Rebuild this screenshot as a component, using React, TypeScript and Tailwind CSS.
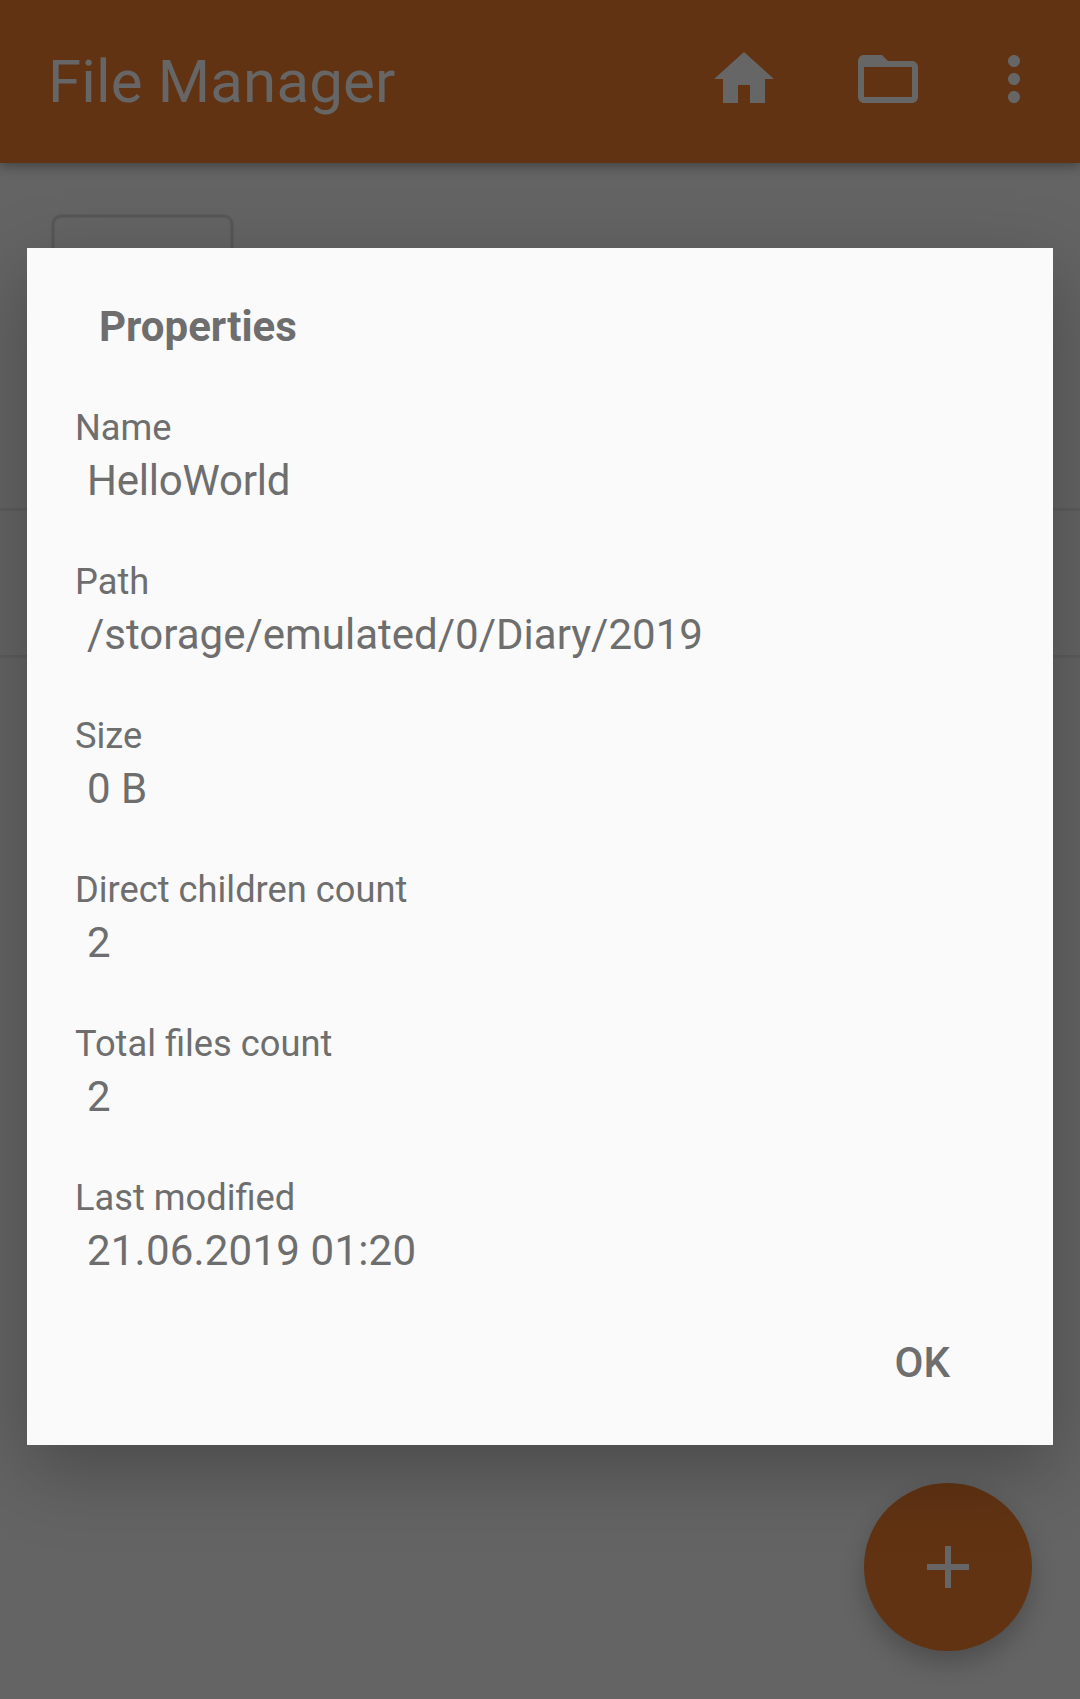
const properties = [
  { label: "Name", value: "HelloWorld", tracking: "tracking-[-0.2px]" },
  { label: "Path", value: "/storage/emulated/0/Diary/2019", tracking: "tracking-normal" },
  { label: "Size", value: "0 B", tracking: "tracking-normal" },
  { label: "Direct children count", value: "2", tracking: "tracking-normal" },
  { label: "Total files count", value: "2", tracking: "tracking-normal" },
  { label: "Last modified", value: "21.06.2019 01:20", tracking: "tracking-[0.2px]" },
];

function Icon({ d }: { d: string }) {
  return (
    <svg viewBox="0 0 24 24" className="size-[72px] shrink-0 fill-current">
      <path d={d} />
    </svg>
  );
}

function AppBar() {
  return (
    <header className="relative flex h-[163px] shrink-0 items-start bg-[#613313] pl-12 pr-[30px] pt-[43px] text-[#666666] shadow-[0_4px_10px_rgba(0,0,0,0.3)]">
      <h1 className="mr-auto text-[60px] leading-[77px] tracking-[0.15px]">File Manager</h1>
      <button className="mr-[72px]">
        <Icon d="M10 20v-6h4v6h5v-8h3L12 3 2 12h3v8z" />
      </button>
      <button className="mr-[54px]">
        <Icon d="M20 6h-8l-2-2H4c-1.1 0-1.99.9-1.99 2L2 18c0 1.1.9 2 2 2h16c1.1 0 2-.9 2-2V8c0-1.1-.9-2-2-2zm0 12H4V8h16v10z" />
      </button>
      <button>
        <Icon d="M12 8c1.1 0 2-.9 2-2s-.9-2-2-2-2 .9-2 2 .9 2 2 2zm0 2c-1.1 0-2 .9-2 2s.9 2 2 2 2-.9 2-2-.9-2-2-2zm0 6c-1.1 0-2 .9-2 2s.9 2 2 2 2-.9 2-2-.9-2-2-2z" />
      </button>
    </header>
  );
}

function PropertiesDialog() {
  return (
    <section className="absolute left-[27px] top-[248px] flex h-[1197px] w-[1026px] flex-col bg-[#fafafa] text-[#6e6e6e] shadow-[0_24px_72px_rgba(0,0,0,0.27)]">
      <h2 className="ml-[72px] mt-[54px] text-[42px] font-bold leading-[49px]">Properties</h2>
      <dl className="ml-12 mt-14 flex flex-col gap-14">
        {properties.map((p) => (
          <div key={p.label} className="flex flex-col gap-[7px]">
            <dt className="text-[36.25px] leading-[42px]">{p.label}</dt>
            <dd className={`pl-3 text-[42px] leading-[49px] ${p.tracking}`}>{p.value}</dd>
          </div>
        ))}
      </dl>
      <button className="mr-[103px] mt-[63px] self-end text-[42px] font-medium leading-[49px]">OK</button>
    </section>
  );
}

export default function App() {
  return (
    <div className="relative flex h-[1699px] w-[1080px] flex-col overflow-hidden bg-[#646464] font-['Roboto',sans-serif]">
      <AppBar />
      <main className="flex flex-col">
        <div className="h-[348px] border-b-[3px] border-[#5d5d5d] pl-[52px] pt-[52px]">
          <div className="h-[180px] w-[181px] rounded-[9px] border-2 border-[#565656] shadow-[0_0_2px_rgba(0,0,0,0.2),inset_0_0_2px_rgba(0,0,0,0.2)]" />
        </div>
        <div className="h-[147px] border-b-[3px] border-[#5d5d5d]" />
      </main>
      <button className="absolute left-[864px] top-[1483px] flex size-[168px] items-center justify-center rounded-full bg-[#613313] text-[#666666] shadow-[0_12px_24px_rgba(0,0,0,0.22)]">
        <Icon d="M19 13h-6v6h-2v-6H5v-2h6V5h2v6h6v2z" />
      </button>
      <PropertiesDialog />
    </div>
  );
}
